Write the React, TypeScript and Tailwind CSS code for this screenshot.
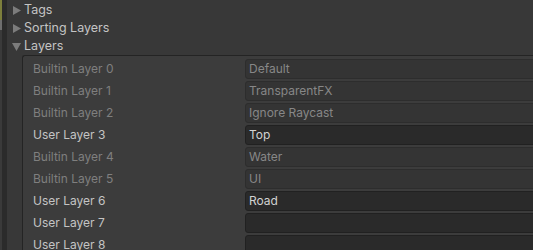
import React from "react";

type Layer = { label: string; value: string; builtin: boolean };

const layers: Layer[] = [
  { label: "Builtin Layer 0", value: "Default", builtin: true },
  { label: "Builtin Layer 1", value: "TransparentFX", builtin: true },
  { label: "Builtin Layer 2", value: "Ignore Raycast", builtin: true },
  { label: "User Layer 3", value: "Top", builtin: false },
  { label: "Builtin Layer 4", value: "Water", builtin: true },
  { label: "Builtin Layer 5", value: "UI", builtin: true },
  { label: "User Layer 6", value: "Road", builtin: false },
  { label: "User Layer 7", value: "", builtin: false },
  { label: "User Layer 8", value: "", builtin: false },
];

function Arrow({ open }: { open?: boolean }) {
  return (
    <svg width="9" height="9" viewBox="0 0 9 9" className="shrink-0">
      {open ? (
        <path d="M0 1 L9 1 L4.5 9 Z" fill="#7c7c7c" />
      ) : (
        <path d="M1 0 L9 4.5 L1 9 Z" fill="#7c7c7c" />
      )}
    </svg>
  );
}

function Foldout({ title, open }: { title: string; open?: boolean }) {
  return (
    <div className="h-[18px] flex items-center gap-[3px] pl-[5px] pt-[1px] text-[#c4c4c4] text-[12.5px]">
      <Arrow open={open} />
      <span>{title}</span>
    </div>
  );
}

function LayerRow({ layer }: { layer: Layer }) {
  return (
    <div className="h-[22px] flex items-center">
      <div
        className={
          "w-[212px] shrink-0 " +
          (layer.builtin ? "text-[#7f7f7f]" : "text-[#c4c4c4]")
        }
      >
        {layer.label}
      </div>
      <div
        className={
          "flex-1 h-[20px] -mr-[4px] rounded-[3px] border flex items-center px-[3px] " +
          (layer.builtin
            ? "bg-[#343434] border-[#2d2d2d] text-[#878787]"
            : "bg-[#2a2a2a] border-[#212121] text-[#d2d2d2]")
        }
      >
        {layer.value}
      </div>
    </div>
  );
}

export default function App() {
  return (
    <div
      className="w-[533px] h-[250px] overflow-hidden bg-[#383838] flex text-[12px]"
      style={{ fontFamily: "Inter, 'Noto Sans', sans-serif" }}
    >
      <div className="w-[2px] shrink-0 flex flex-col">
        <div className="h-[20px] bg-[#7d7f3c]" />
        <div className="h-[10px] bg-[#6e6e6e]" />
        <div className="flex-1 bg-[#3a3a3a]" />
      </div>
      <div className="w-[5px] shrink-0 bg-[#2b2b2b]" />
      <div className="flex-1 pt-[1px] flex flex-col">
        <Foldout title="Tags" />
        <Foldout title="Sorting Layers" />
        <Foldout title="Layers" open />
        <div className="ml-[15px] flex-1 border-t border-l border-[#242424] rounded-tl-[3px] bg-[#3c3c3c] pl-[10px] pt-[2px]">
          {layers.map((l) => (
            <LayerRow key={l.label} layer={l} />
          ))}
        </div>
      </div>
    </div>
  );
}
